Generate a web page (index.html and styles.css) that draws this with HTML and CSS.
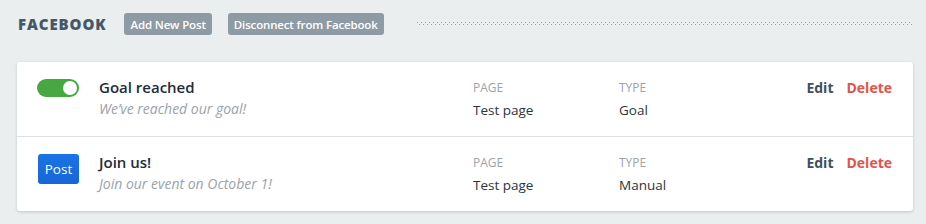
FILE: index.html
```html
<!DOCTYPE html>
<html>
<head>
<meta charset="utf-8">
<link rel="stylesheet" href="styles.css">
</head>
<body>
<div class="page">
  <header class="head">
    <h1 class="head-title">FACEBOOK</h1>
    <button class="head-btn">Add New Post</button>
    <button class="head-btn">Disconnect from Facebook</button>
    <div class="dots"></div>
  </header>
  <section class="card">
    <div class="row">
      <div class="lead"><span class="toggle"><span class="knob"></span></span></div>
      <div class="info">
        <div class="title">Goal reached</div>
        <div class="sub">We’ve reached our goal!</div>
      </div>
      <div class="field">
        <div class="label">PAGE</div>
        <div class="value">Test page</div>
      </div>
      <div class="field">
        <div class="label">TYPE</div>
        <div class="value">Goal</div>
      </div>
      <div class="actions">
        <a class="edit">Edit</a>
        <a class="delete">Delete</a>
      </div>
    </div>
    <div class="row">
      <div class="lead"><span class="post-btn">Post</span></div>
      <div class="info">
        <div class="title">Join us!</div>
        <div class="sub">Join our event on October 1!</div>
      </div>
      <div class="field">
        <div class="label">PAGE</div>
        <div class="value">Test page</div>
      </div>
      <div class="field">
        <div class="label">TYPE</div>
        <div class="value">Manual</div>
      </div>
      <div class="actions">
        <a class="edit">Edit</a>
        <a class="delete">Delete</a>
      </div>
    </div>
  </section>
</div>
</body>
</html>
```

FILE: styles.css
```css
* { box-sizing: border-box; }
html, body { margin: 0; padding: 0; }
body {
  background: #eaeeef;
  font-family: "Open Sans", "Lato", sans-serif;
  color: #2b3540;
  width: 926px;
  height: 224px;
  overflow: hidden;
}
.page { padding: 13px 13px 0 17px; }
.head {
  display: flex;
  align-items: center;
  height: 22px;
  padding-left: 1px;
}
.head-title {
  margin: 0 18px 0 0;
  font-size: 15px;
  font-weight: 800;
  letter-spacing: 0.9px;
  color: #435868;
}
.head-btn {
  border: 0;
  background: #8e9ba4;
  color: #fff;
  font-family: inherit;
  font-size: 11.5px;
  font-weight: 600;
  letter-spacing: -0.15px;
  height: 22px;
  padding: 0 6px;
  border-radius: 3px;
  margin-right: 16px;
  white-space: nowrap;
}
.dots {
  flex: 1;
  margin-left: 17px;
  margin-right: 1px;
  height: 5px;
  margin-top: -2px;
  background-image:
    linear-gradient(90deg, #98a4ad 1px, transparent 1px),
    linear-gradient(90deg, #98a4ad 1px, transparent 1px);
  background-size: 4px 1px, 4px 1px;
  background-position: 0 1px, 2px 3px;
  background-repeat: repeat-x;
}
.card {
  margin-top: 27px;
  background: #fff;
  border-radius: 3px;
  box-shadow: 0 1px 3px rgba(60, 80, 95, 0.25);
  width: 896px;
}
.row {
  display: grid;
  grid-template-columns: 42px 354px 126px 168px 85px;
  column-gap: 20px;
  align-items: start;
  height: 74px;
  padding: 15px 21px 0 20px;
}
.row + .row {
  border-top: 1px solid #dde2e5;
  height: 75px;
}
.lead { display: flex; padding-top: 2px; }
.toggle {
  display: block;
  position: relative;
  width: 42px;
  height: 18px;
  border-radius: 9px;
  background: #47a842;
}
.knob {
  position: absolute;
  right: 2px;
  top: 2px;
  width: 14px;
  height: 14px;
  border-radius: 50%;
  background: #fff;
}
.post-btn {
  display: flex;
  align-items: center;
  justify-content: center;
  margin-left: 1px;
  width: 43px;
  height: 30px;
  border-radius: 3px;
  background: linear-gradient(#1b73e6, #1666d6);
  color: #fff;
  font-size: 13.5px;
}
.title {
  font-size: 15px;
  font-weight: 600;
  line-height: 20px;
  color: #232d37;
}
.sub {
  margin-top: 3px;
  font-size: 14px;
  font-style: italic;
  line-height: 18px;
  color: #9aa3a9;
}
.label {
  margin-top: 4px;
  font-size: 12px;
  line-height: 14px;
  color: #9ba4aa;
}
.value {
  margin-top: 6px;
  font-size: 13.5px;
  line-height: 18px;
  color: #2b3540;
}
.actions {
  display: flex;
  justify-content: flex-end;
  gap: 13px;
  font-size: 14px;
  font-weight: 700;
  line-height: 20px;
  padding-top: 1px;
}
.edit { color: #3e505e; }
.delete { color: #e2534b; }
```
